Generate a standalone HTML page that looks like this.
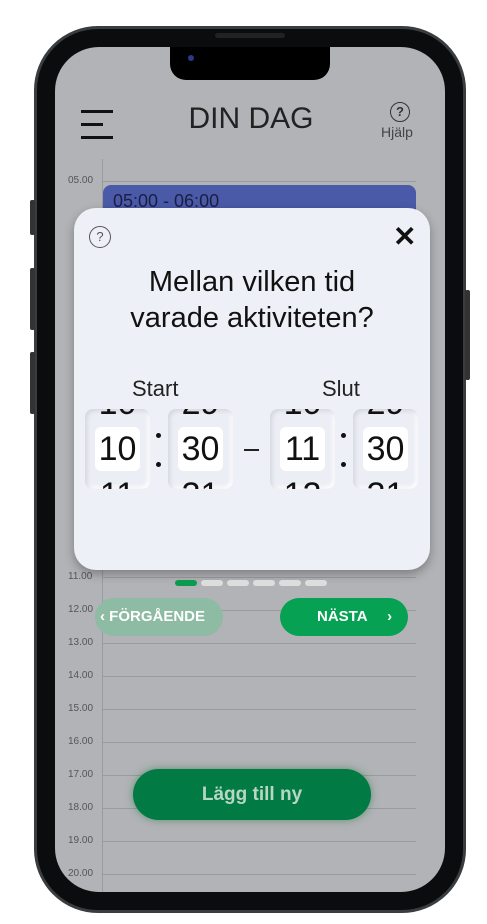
<!DOCTYPE html><html><head><style>
*{margin:0;padding:0;box-sizing:border-box}
body{width:487px;height:924px;background:#fff;position:relative;overflow:hidden;font-family:"Liberation Sans",sans-serif}
.abs{position:absolute}
.frame{left:34px;top:26px;width:432px;height:887px;border-radius:64px;background:#0b0c0d;border:3px solid #3a3d40}
.screen{left:55px;top:47px;width:390px;height:845px;border-radius:44px;background:#b1b3b6;overflow:hidden}
.line{position:absolute;left:47px;width:314px;height:1px;background:#999b9e}
.lbl{position:absolute;left:13px;font-size:10px;color:#555}
.pk{position:absolute;top:409px;width:65px;height:80px;border-radius:8px;background:#eceef5;box-shadow:inset 2px 2px 4px #d4d6dd,inset -2px -2px 4px #fff;overflow:hidden;text-align:center;font-size:34px;color:#111}
.pk .in{position:absolute;left:10px;top:18px;width:45px;height:44px;background:#fff;border-radius:6px}
.pk span{position:absolute;left:0;width:100%;line-height:40px}
.dot{position:absolute;top:580px;width:22px;height:6px;border-radius:3px;background:#ddd}
</style></head><body>
<div class="abs frame"></div>
<div class="abs" style="left:30px;top:200px;width:5px;height:35px;background:#333;border-radius:2px"></div>
<div class="abs" style="left:30px;top:268px;width:5px;height:62px;background:#333;border-radius:2px"></div>
<div class="abs" style="left:30px;top:352px;width:5px;height:62px;background:#333;border-radius:2px"></div>
<div class="abs" style="left:465px;top:290px;width:5px;height:90px;background:#333;border-radius:2px"></div>
<div class="abs screen">
<div class="abs" style="left:47px;top:112px;width:1px;height:740px;background:#999b9e"></div>
<div class="line" style="top:134px"></div><div class="lbl" style="top:128px">05.00</div>
<div class="line" style="top:530px"></div><div class="lbl" style="top:524px">11.00</div>
<div class="line" style="top:563px"></div><div class="lbl" style="top:557px">12.00</div>
<div class="line" style="top:596px"></div><div class="lbl" style="top:590px">13.00</div>
<div class="line" style="top:629px"></div><div class="lbl" style="top:623px">14.00</div>
<div class="line" style="top:662px"></div><div class="lbl" style="top:656px">15.00</div>
<div class="line" style="top:695px"></div><div class="lbl" style="top:689px">16.00</div>
<div class="line" style="top:728px"></div><div class="lbl" style="top:722px">17.00</div>
<div class="line" style="top:761px"></div><div class="lbl" style="top:755px">18.00</div>
<div class="line" style="top:794px"></div><div class="lbl" style="top:788px">19.00</div>
<div class="line" style="top:827px"></div><div class="lbl" style="top:821px">20.00</div>
<div class="abs" style="left:48px;top:138px;width:313px;height:40px;background:#4a5aa8;border-radius:8px;padding:6px 10px;font-size:18px;color:#1a1f40">05:00 - 06:00</div>
<div class="abs" style="left:115px;top:0;width:160px;height:33px;background:#000;border-radius:0 0 16px 16px"></div>
<div class="abs" style="left:133px;top:8px;width:6px;height:6px;background:#2a3a8a;border-radius:50%"></div>
</div>
<div class="abs" style="left:215px;top:33px;width:70px;height:5px;background:#222;border-radius:3px"></div>
<div class="abs" style="left:81px;top:110px;width:32px;height:2.5px;background:#111"></div>
<div class="abs" style="left:81px;top:123px;width:22px;height:2.5px;background:#111"></div>
<div class="abs" style="left:81px;top:136px;width:32px;height:2.5px;background:#111"></div>
<div class="abs" style="left:150px;top:102px;width:202px;text-align:center;font-size:30px;color:#222">DIN DAG</div>
<div class="abs" style="left:390px;top:102px;width:20px;height:20px;border:1.5px solid #333;border-radius:50%;text-align:center;font-size:13px;font-weight:bold;line-height:17px;color:#333">?</div>
<div class="abs" style="left:381px;top:124px;font-size:14px;color:#444">Hjälp</div>
<div class="abs" style="left:74px;top:208px;width:356px;height:362px;background:#eef0f7;border-radius:22px;box-shadow:0 4px 10px rgba(0,0,0,.3)"></div>
<div class="abs" style="left:89px;top:226px;width:22px;height:22px;border:1.5px solid #555;border-radius:50%;text-align:center;font-size:13px;line-height:19px;color:#555">?</div>
<div class="abs" style="left:393px;top:222px;font-size:28px;font-weight:bold;color:#111;line-height:30px">✕</div>
<div class="abs" style="left:74px;top:264px;width:356px;text-align:center;font-size:29px;line-height:36px;color:#111">Mellan vilken tid<br>varade aktiviteten?</div>
<div class="abs" style="left:132px;top:376px;font-size:22px;color:#222">Start</div>
<div class="abs" style="left:322px;top:376px;font-size:22px;color:#222">Slut</div>
<div class="pk" style="left:85px"><div class="in"></div><span style="top:-26px">10</span><span style="top:20px">10</span><span style="top:66px">11</span></div>
<div class="pk" style="left:168px"><div class="in"></div><span style="top:-26px">29</span><span style="top:20px">30</span><span style="top:66px">31</span></div>
<div class="pk" style="left:270px"><div class="in"></div><span style="top:-26px">10</span><span style="top:20px">11</span><span style="top:66px">12</span></div>
<div class="pk" style="left:353px"><div class="in"></div><span style="top:-26px">29</span><span style="top:20px">30</span><span style="top:66px">31</span></div>
<div class="abs" style="left:156px;top:433px;width:5px;height:5px;background:#111;border-radius:50%"></div>
<div class="abs" style="left:156px;top:462px;width:5px;height:5px;background:#111;border-radius:50%"></div>
<div class="abs" style="left:341px;top:433px;width:5px;height:5px;background:#111;border-radius:50%"></div>
<div class="abs" style="left:341px;top:462px;width:5px;height:5px;background:#111;border-radius:50%"></div>
<div class="abs" style="left:244px;top:449px;width:15px;height:2px;background:#222"></div>
<div class="dot" style="left:175px;background:#0a9a50"></div>
<div class="dot" style="left:201px"></div><div class="dot" style="left:227px"></div><div class="dot" style="left:253px"></div><div class="dot" style="left:279px"></div><div class="dot" style="left:305px"></div>
<div class="abs" style="left:95px;top:598px;width:128px;height:38px;border-radius:19px;background:#8dbba3;color:#fff;font-weight:bold;font-size:15px;line-height:38px;padding-left:5px">‹ FÖRGÅENDE</div>
<div class="abs" style="left:280px;top:598px;width:128px;height:38px;border-radius:19px;background:#06a152;color:#fff;font-weight:bold;font-size:15px;line-height:38px;padding-left:37px">NÄSTA <span style="margin-left:16px">›</span></div>
<div class="abs" style="left:133px;top:769px;width:238px;height:51px;border-radius:26px;background:#017a44;box-shadow:0 0 8px rgba(40,120,70,.6);color:#b8d6c4;font-weight:bold;font-size:19px;line-height:51px;text-align:center">Lägg till ny</div>
</body></html>
